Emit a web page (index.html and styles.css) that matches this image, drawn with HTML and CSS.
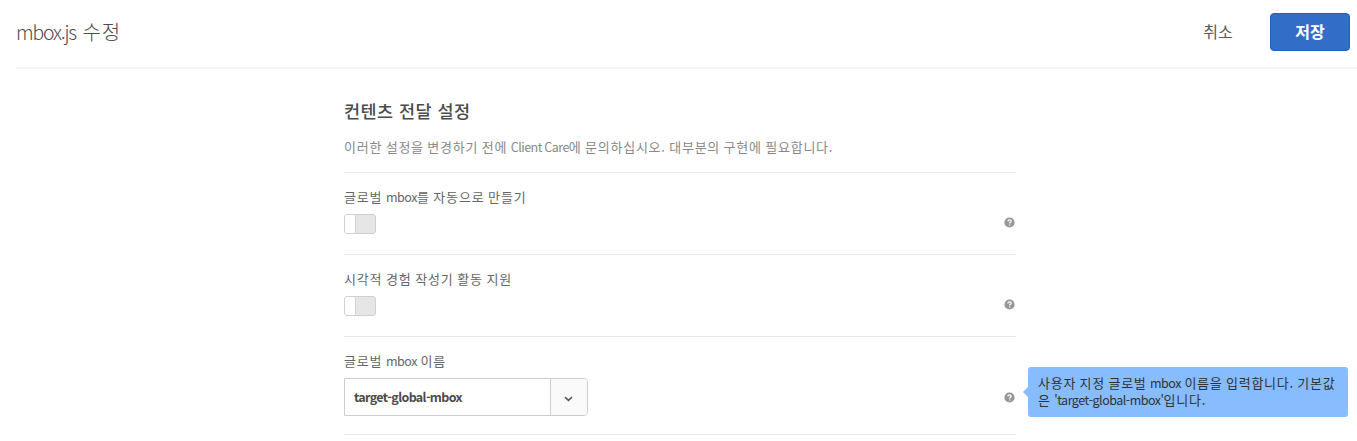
FILE: index.html
```html
<!DOCTYPE html>
<html lang="ko">
<head>
<meta charset="utf-8">
<title>mbox.js 수정</title>
<link rel="stylesheet" href="styles.css">
</head>
<body>
<header class="header">
  <h1 class="title"><span class="t"><span class="latin">mbox.js</span> 수정</span></h1>
  <button class="cancel"><span class="t">취소</span></button>
  <button class="save"><span class="t">저장</span></button>
</header>
<main class="settings">
  <h2 class="heading"><span class="t">컨텐츠 전달 설정</span></h2>
  <p class="intro"><span class="t">이러한 설정을 변경하기 전에 <span class="latin">Client Care</span>에 문의하십시오. 대부분의 구현에 필요합니다.</span></p>
  <section class="row">
    <div class="label"><span class="t">글로벌 <span class="latin">mbox</span>를 자동으로 만들기</span></div>
    <div class="control"><span class="switch"><span class="knob"></span></span>
      <svg class="help" viewBox="0 0 11 11"><circle cx="5.5" cy="5.5" r="5.1"/><path d="M3.9 4.4C3.9 2.3 7.2 2.4 7.2 4.2C7.2 5.3 5.6 5.3 5.6 6.6M5.6 7.4V8.6"/></svg></div>
  </section>
  <section class="row">
    <div class="label"><span class="t">시각적 경험 작성기 활동 지원</span></div>
    <div class="control"><span class="switch"><span class="knob"></span></span>
      <svg class="help" viewBox="0 0 11 11"><circle cx="5.5" cy="5.5" r="5.1"/><path d="M3.9 4.4C3.9 2.3 7.2 2.4 7.2 4.2C7.2 5.3 5.6 5.3 5.6 6.6M5.6 7.4V8.6"/></svg></div>
  </section>
  <section class="row name-row">
    <div class="label"><span class="t">글로벌 <span class="latin">mbox</span> 이름</span></div>
    <div class="control">
      <div class="combo"><span class="value"><span class="t">target-global-mbox</span></span><span class="arrow"><svg width="9" height="6" viewBox="0 0 9 6"><path d="M1 1.2L4.5 4.4L8 1.2"/></svg></span></div>
      <svg class="help" viewBox="0 0 11 11"><circle cx="5.5" cy="5.5" r="5.1"/><path d="M3.9 4.4C3.9 2.3 7.2 2.4 7.2 4.2C7.2 5.3 5.6 5.3 5.6 6.6M5.6 7.4V8.6"/></svg>
      <div class="tooltip"><span class="t">사용자 지정 글로벌 <span class="latin">mbox</span> 이름을 입력합니다. 기본값</span><br><span class="t">은 <span class="latin">'target-global-mbox'</span>입니다.</span></div>
    </div>
  </section>
</main>
</body>
</html>
```
FILE: styles.css
```css
* { box-sizing: border-box; }
body { margin: 0; height: 441px; overflow: hidden; background: #fff; color: #4b4b4b; font: 13px/18px "Noto Sans CJK KR", sans-serif; }
.t { display: inline-block; white-space: nowrap; }
.latin { font-size: 12.5px; line-height: 1; letter-spacing: -.5px; }
.header { display: flex; align-items: center; height: 69px; margin-left: 16px; padding: 0 7px 3px 0; border-bottom: 2px solid #f4f4f4; }
.title { margin: 0; flex: 1; font-size: 20px; line-height: 24px; font-weight: 300; letter-spacing: .9px; }
.title .latin { font-size: 19.5px; letter-spacing: -1.2px; }
button { border: 0; background: none; font: inherit; font-size: 16px; line-height: 24px; padding: 0 0 3px; color: #5a5a5a; }
.cancel { width: 60px; margin-right: 22px; }
.save { width: 80px; height: 38px; border: 1px solid #1f5fbe; border-radius: 4px; background: #326ec8; color: #fff; font-weight: 700; }
.settings { width: 672px; margin-left: 344px; padding-top: 30px; }
.heading { margin: 0; font-size: 17.5px; line-height: 24px; font-weight: 500; letter-spacing: .45px; }
.intro { margin: 0; padding-top: 15px; height: 49px; color: #888; line-height: 18px; letter-spacing: .74px; word-spacing: -.8px; }
.row { height: 82px; border-top: 1px solid #e6e6e6; padding-top: 15px; }
.label { height: 18px; color: #666; letter-spacing: .82px; word-spacing: -.8px; }
.control { position: relative; display: flex; justify-content: space-between; align-items: center; height: 36px; }
.switch { display: block; width: 32px; height: 20px; border: 1px solid #d0d0d0; border-radius: 3px; background: #e6e6e6; }
.knob { display: block; width: 11px; height: 18px; border-right: 1px solid #d0d0d0; border-radius: 2px; background: #fff; }
.help { width: 11px; height: 11px; margin: 0 1px 4px 0; }
.help circle { fill: #969696; }
.help path { fill: none; stroke: #fff; stroke-width: 1.3; }
.name-row { height: 99px; border-bottom: 1px solid #e6e6e6; }
.name-row .control { height: 54px; }
.name-row .help { margin-bottom: 0; }
.combo { display: flex; width: 244px; height: 38px; border: 1px solid #ccc; border-radius: 0 4px 4px 0; }
.value { flex: 1; padding: 9px; font-size: 12.5px; font-weight: 700; letter-spacing: -.65px; }
.arrow { width: 37px; display: flex; align-items: center; justify-content: center; border-left: 1px solid #ccc; border-radius: 0 3px 3px 0; background: #fafafa; padding: 3px 2px 0 0; }
.arrow path { fill: none; stroke: #5a5a5a; stroke-width: 1.6; }
.tooltip { position: absolute; left: 684px; top: -3px; width: 320px; height: 50px; border-radius: 3px; background: #87bcff; color: #323232; padding: 7px 10px; line-height: 17px; letter-spacing: .74px; word-spacing: -.9px; }
.tooltip::before { content: ""; position: absolute; left: -5px; top: 20px; border: solid transparent; border-width: 5px 5px 5px 0; border-right-color: #87bcff; }
.tooltip .t { vertical-align: top; }
```
